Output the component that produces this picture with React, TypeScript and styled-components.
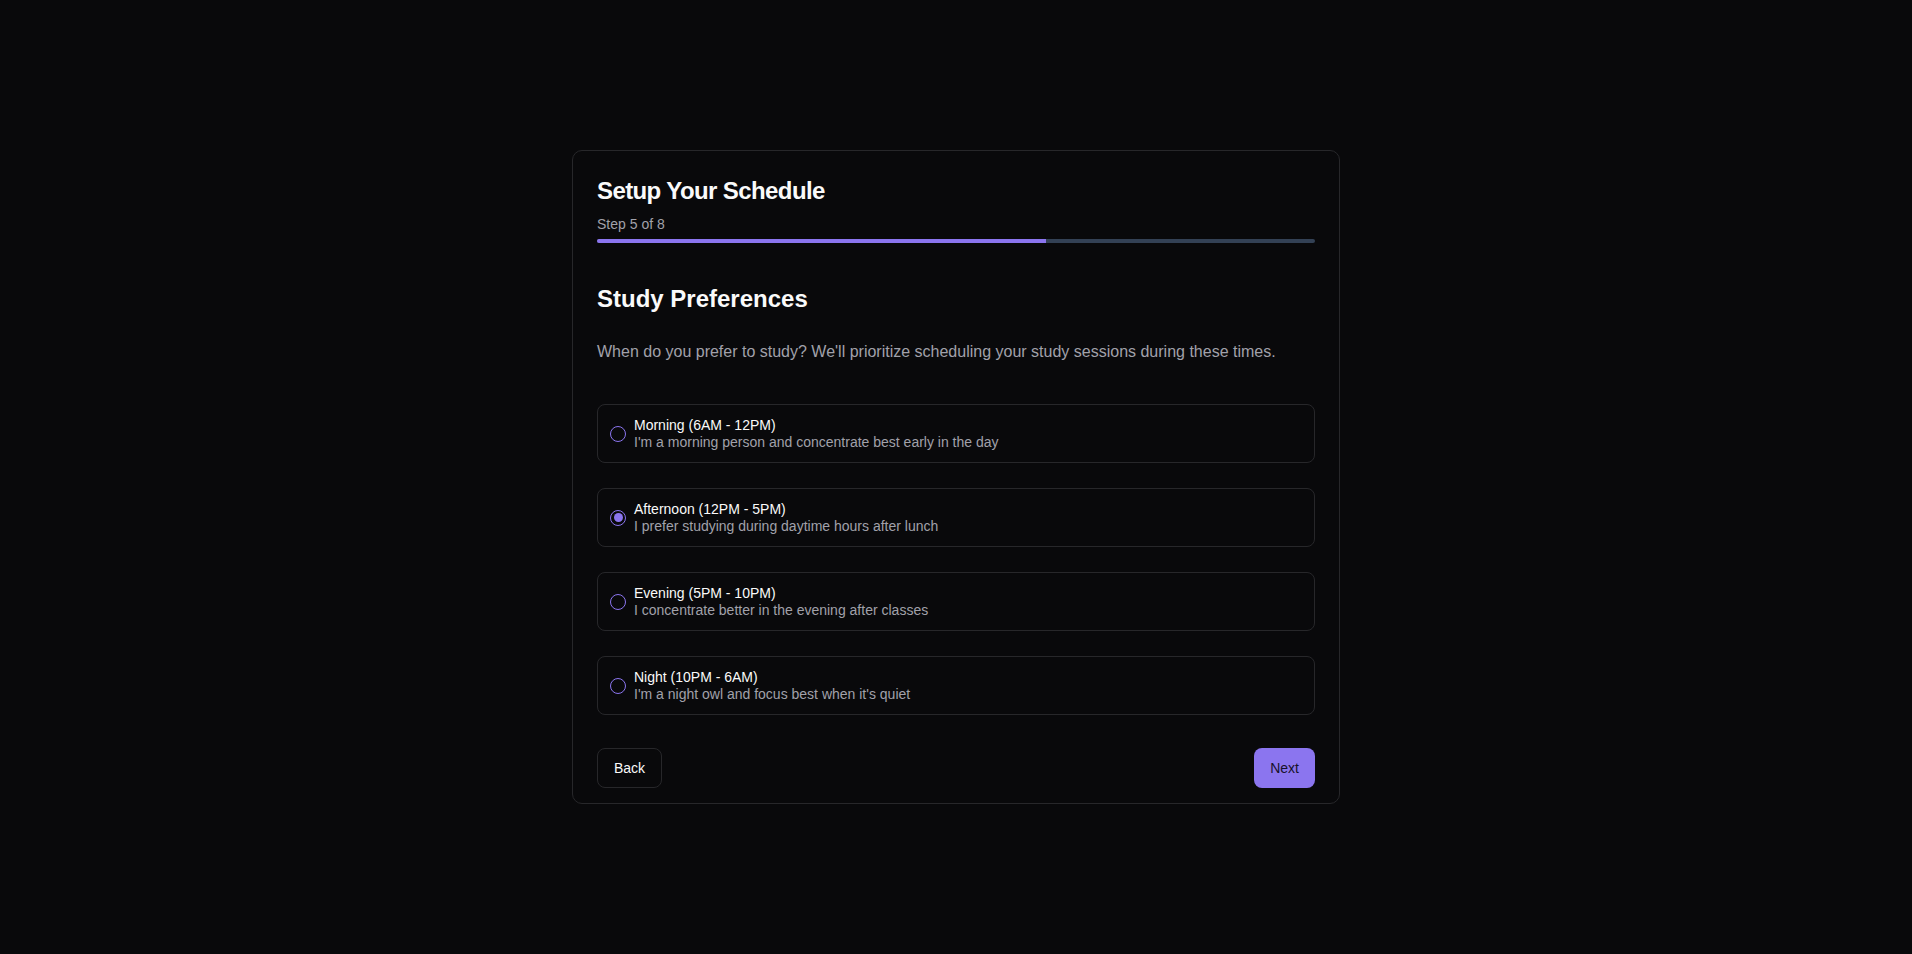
import { useState } from "react";
import styled, { createGlobalStyle } from "styled-components";

const GlobalStyle = createGlobalStyle`
    html, body {
        margin: 0;
        padding: 0;
        background: #09090b;
    }
    * {
        box-sizing: border-box;
    }
    body {
        font-family: "Liberation Sans", Arial, sans-serif;
        color: #fafafa;
    }
`

const Page = styled.div`
    display: flex;
    justify-content: center;
    align-items: center;
    width: 100%;
    min-height: 954px;
`

const Card = styled.div`
    display: flex;
    flex-direction: column;
    width: 768px;
    padding: 26px 24px 15px;
    border: 1px solid #27272a;
    border-radius: 10px;
    background: #09090b;
`

const Title = styled.h1`
    margin: 0;
    font-size: 24px;
    line-height: 28px;
    font-weight: 700;
    letter-spacing: -0.6px;
    color: #fafafa;
`

const StepText = styled.div`
    margin-top: 11px;
    font-size: 14px;
    line-height: 16px;
    color: #a1a1aa;
`

const Track = styled.div`
    margin-top: 7px;
    width: 100%;
    height: 4px;
    border-radius: 2px;
    background: #334155;
    overflow: hidden;
`

const Fill = styled.div`
    height: 100%;
    background: #8b75ef;
`

const SectionTitle = styled.h2`
    margin: 42px 0 0;
    font-size: 24px;
    line-height: 28px;
    font-weight: 700;
    color: #fafafa;
`

const Description = styled.p`
    margin: 29px 0 0;
    font-size: 16px;
    line-height: 20px;
    color: #a1a1aa;
`

const OptionList = styled.div`
    display: flex;
    flex-direction: column;
    gap: 25px;
    margin-top: 42px;
`

const Option = styled.label`
    display: flex;
    align-items: center;
    gap: 8px;
    height: 59px;
    padding: 0 12px;
    border: 1px solid #27272a;
    border-radius: 8px;
    cursor: pointer;
`

const Radio = styled.span<{ $checked: boolean }>`
    display: flex;
    justify-content: center;
    align-items: center;
    flex-shrink: 0;
    width: 16px;
    height: 16px;
    border: 1.5px solid #8b75ef;
    border-radius: 50%;

    &::after {
        content: "";
        display: ${(props) => (props.$checked ? "block" : "none")};
        width: 9px;
        height: 9px;
        border-radius: 50%;
        background: #8b75ef;
    }
`

const OptionText = styled.div`
    display: flex;
    flex-direction: column;
`

const OptionLabel = styled.span`
    font-size: 14px;
    line-height: 17px;
    color: #fafafa;
`

const OptionHint = styled.span`
    font-size: 14px;
    line-height: 17px;
    color: #a1a1aa;
`

const Footer = styled.div`
    display: flex;
    justify-content: space-between;
    align-items: center;
    margin-top: 33px;
`

const Button = styled.button<{ $primary?: boolean }>`
    height: 40px;
    padding: 0 16px;
    border-radius: 8px;
    font-family: "Liberation Sans", Arial, sans-serif;
    font-size: 14px;
    cursor: pointer;
    border: ${(props) => (props.$primary ? "none" : "1px solid #27272a")};
    background: ${(props) => (props.$primary ? "#8b75ef" : "#09090b")};
    color: ${(props) => (props.$primary ? "#18122b" : "#fafafa")};
`

const options = [
    { id: "morning", label: "Morning (6AM - 12PM)", hint: "I'm a morning person and concentrate best early in the day" },
    { id: "afternoon", label: "Afternoon (12PM - 5PM)", hint: "I prefer studying during daytime hours after lunch" },
    { id: "evening", label: "Evening (5PM - 10PM)", hint: "I concentrate better in the evening after classes" },
    { id: "night", label: "Night (10PM - 6AM)", hint: "I'm a night owl and focus best when it's quiet" },
]

export default function App() {
    const [selected, setSelected] = useState("afternoon")
    const step = 5
    const total = 8

    return (
        <>
            <GlobalStyle />
            <Page>
                <Card>
                    <Title>Setup Your Schedule</Title>
                    <StepText>Step {step} of {total}</StepText>
                    <Track>
                        <Fill style={{ width: `${(step / total) * 100}%` }} />
                    </Track>

                    <SectionTitle>Study Preferences</SectionTitle>
                    <Description>
                        When do you prefer to study? We'll prioritize scheduling your study sessions during these times.
                    </Description>

                    <OptionList>
                        {options.map((opt) => (
                            <Option key={opt.id} onClick={() => setSelected(opt.id)}>
                                <Radio $checked={selected === opt.id} />
                                <OptionText>
                                    <OptionLabel>{opt.label}</OptionLabel>
                                    <OptionHint>{opt.hint}</OptionHint>
                                </OptionText>
                            </Option>
                        ))}
                    </OptionList>

                    <Footer>
                        <Button>Back</Button>
                        <Button $primary>Next</Button>
                    </Footer>
                </Card>
            </Page>
        </>
    )
}
